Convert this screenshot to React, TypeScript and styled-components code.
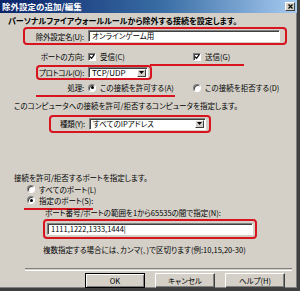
import styled, { createGlobalStyle } from "styled-components";

const GlobalStyle = createGlobalStyle`
    html, body {
        margin: 0;
        padding: 0;
        background: #d4d0c8;
    }
    body {
        font-family: "Noto Sans CJK JP", "Noto Sans", sans-serif;
        font-feature-settings: "palt";
        font-size: 7.5px;
        color: #000;
    }
`;

const RED = "#d8141e";

const Window = styled.div`
    width: 297px;
    height: 288px;
    background: #d4d0c8;
    border-right: 3px solid #404040;
    border-bottom: 3px solid #404040;
    box-shadow: inset -1px -1px #808080;
    display: flex;
    flex-direction: column;
    overflow: hidden;
`;
const TitleBar = styled.div`
    height: 13px;
    display: flex;
    align-items: center;
    justify-content: space-between;
    background: linear-gradient(to right, #0a246a, #3a6ea5 55%, #a6caf0);
    padding: 0 2px 0 2px;
`;
const Title = styled.span`
    color: #fff;
    font-weight: bold;
    font-size: 8.5px;
    line-height: 13px;
    white-space: nowrap;
`;
const CloseButton = styled.div`
    width: 10px;
    height: 9px;
    background: #d4d0c8;
    border: 1px solid;
    border-color: #fff #404040 #404040 #fff;
    box-sizing: border-box;
    display: flex;
    align-items: center;
    justify-content: center;
`;
const Heading = styled.div`
    margin-top: 2px;
    padding-left: 8px;
    height: 11px;
    line-height: 11px;
    font-size: 8px;
    font-weight: bold;
    white-space: nowrap;
`;
const Row = styled.div<{ $top?: number; $indent?: number; $h?: number }>`
    display: flex;
    align-items: center;
    margin-top: ${({ $top }) => $top ?? 0}px;
    padding-left: ${({ $indent }) => $indent ?? 0}px;
    height: ${({ $h }) => $h ?? 12}px;
    white-space: nowrap;
`;
const Highlight = styled.div<{ $pad?: string; $w?: number }>`
    display: flex;
    align-items: center;
    gap: 4px;
    box-sizing: border-box;
    width: ${({ $w }) => ($w ? `${$w}px` : "auto")};
    border: 2px solid ${RED};
    border-radius: 4px;
    padding: ${({ $pad }) => $pad ?? "1px 3px"};
`;
const Label = styled.span<{ $w?: number }>`
    display: inline-block;
    width: ${({ $w }) => ($w ? `${$w}px` : "auto")};
    text-align: right;
    letter-spacing: -0.2px;
    white-space: nowrap;
`;
const Underlined = styled.div<{ $lead?: number }>`
    display: flex;
    align-items: center;
    border-bottom: 2px solid ${RED};
    padding-left: ${({ $lead }) => $lead ?? 0}px;
    padding-bottom: 2px;
    margin-bottom: -4px;
`;
const TextInput = styled.div<{ $w: number; $h?: number }>`
    width: ${({ $w }) => $w}px;
    height: ${({ $h }) => $h ?? 12}px;
    box-sizing: border-box;
    background: #fff;
    border: 1px solid;
    border-color: #808080 #fff #fff #808080;
    box-shadow: inset 1px 1px #404040;
    padding-left: 3px;
    line-height: 10px;
    display: flex;
    align-items: center;
    white-space: nowrap;
`;
const Select = styled(TextInput)`
    justify-content: space-between;
    padding-right: 1px;
`;
const DropButton = styled.span`
    width: 9px;
    height: 8px;
    box-sizing: border-box;
    background: #d4d0c8;
    border: 1px solid;
    border-color: #fff #404040 #404040 #fff;
    display: flex;
    align-items: center;
    justify-content: center;
`;
const Option = styled.div<{ $w?: number }>`
    display: flex;
    align-items: center;
    gap: 4px;
    width: ${({ $w }) => ($w ? `${$w}px` : "auto")};
`;
const Box = styled.span`
    width: 8px;
    height: 8px;
    box-sizing: border-box;
    background: #fff;
    border: 1px solid;
    border-color: #808080 #fff #fff #808080;
    box-shadow: inset 1px 1px #404040;
    display: inline-flex;
    align-items: center;
    justify-content: center;
`;
const Round = styled(Box)`
    border-radius: 50%;
`;
const Dot = styled.span`
    width: 3px;
    height: 3px;
    border-radius: 50%;
    background: #000;
`;
const Separator = styled.div`
    margin: 13px 5px 0 25px;
    height: 1px;
    border-top: 1px solid #808080;
    border-bottom: 1px solid #fff;
`;
const ButtonBar = styled.div`
    display: flex;
    gap: 10px;
    margin-top: 2px;
    padding-left: 85px;
`;
const Button = styled.div<{ $default?: boolean }>`
    width: 60px;
    height: 15px;
    box-sizing: border-box;
    display: flex;
    align-items: center;
    justify-content: center;
    border: 1px solid;
    border-color: ${({ $default }) => ($default ? "#000" : "#fff #404040 #404040 #fff")};
    box-shadow: ${({ $default }) =>
        $default ? "inset 1px 1px #fff, inset -1px -1px #808080" : "inset -1px -1px #808080"};
`;

function Check() {
    return (
        <Box>
            <svg width="6" height="6" viewBox="0 0 7 7">
                <path d="M1 3 L3 5 L6 1" stroke="#000" strokeWidth="1.4" fill="none" />
            </svg>
        </Box>
    );
}

function Radio({ on }: { on?: boolean }) {
    return <Round>{on && <Dot />}</Round>;
}

function Arrow() {
    return (
        <DropButton>
            <svg width="5" height="3" viewBox="0 0 5 3">
                <path d="M0 0 H5 L2.5 3 Z" fill="#000" />
            </svg>
        </DropButton>
    );
}

export default function App() {
    return (
        <>
            <GlobalStyle />
            <Window>
                <TitleBar>
                    <Title>除外設定の追加/編集</Title>
                    <CloseButton>
                        <svg width="5" height="5" viewBox="0 0 5 5">
                            <path d="M0.5 0.5 L4.5 4.5 M4.5 0.5 L0.5 4.5" stroke="#000" strokeWidth="1.2" />
                        </svg>
                    </CloseButton>
                </TitleBar>
                <Heading>パーソナルファイアウォールルールから除外する接続を設定します。</Heading>

                <Row $top={1} $indent={23} $h={18}>
                    <Highlight $pad="1px 3px" $w={264}>
                        <Label $w={56}>除外設定名(U):</Label>
                        <TextInput $w={192}>オンラインゲーム用</TextInput>
                    </Highlight>
                </Row>

                <Row $top={6} $indent={36}>
                    <Label $w={48}>ポートの方向:</Label>
                    <Option $w={62} style={{ marginLeft: 4 }}>
                        <Check />
                        <span>受信(C)</span>
                    </Option>
                    <Underlined $lead={43}>
                        <Option>
                            <Check />
                            <span>送信(G)</span>
                        </Option>
                        <span style={{ width: 14 }} />
                    </Underlined>
                </Row>

                <Row $top={3} $indent={36} $h={15}>
                    <Highlight $pad="0 2px 0 1px" style={{ gap: 5 }}>
                        <Label $w={44}>プロトコル(O):</Label>
                        <Select $w={60} $h={11} style={{ fontSize: 8 }}>
                            <span>TCP/UDP</span>
                            <Arrow />
                        </Select>
                    </Highlight>
                </Row>

                <Row $top={2} $indent={36}>
                    <Underlined>
                        <Label $w={48}>処理:</Label>
                        <Option $w={87} style={{ marginLeft: 4 }}>
                            <Radio on />
                            <span>この接続を許可する(A)</span>
                        </Option>
                    </Underlined>
                    <Option style={{ marginLeft: 18 }}>
                        <Radio />
                        <span>この接続を拒否する(D)</span>
                    </Option>
                </Row>

                <Row $top={7} $indent={14}>
                    このコンピュータへの接続を許可/拒否するコンピュータを指定します。
                </Row>

                <Row $top={3} $indent={49} $h={18}>
                    <Highlight $pad="1px 3px">
                        <Label $w={31}>種類(Y):</Label>
                        <Select $w={117}>
                            <span>すべてのIPアドレス</span>
                            <Arrow />
                        </Select>
                    </Highlight>
                </Row>

                <Row $top={39} $indent={14}>
                    接続を許可/拒否するポートを指定します。
                </Row>
                <Row $top={1} $indent={27} $h={11}>
                    <Option>
                        <Radio />
                        <span>すべてのポート(L)</span>
                    </Option>
                </Row>
                <Row $top={0} $indent={24} $h={11}>
                    <Underlined $lead={3} style={{ width: 66 }}>
                        <Option>
                            <Radio on />
                            <span>指定のポート(S):</span>
                        </Option>
                    </Underlined>
                </Row>
                <Row $top={1} $indent={45}>
                    ポート番号/ポートの範囲を1から65535の間で指定(N):
                </Row>
                <Row $top={1} $indent={43} $h={20}>
                    <Highlight $pad="2px 2px" $w={214}>
                        <TextInput $w={206}>1111,1222,1333,1444|</TextInput>
                    </Highlight>
                </Row>
                <Row $top={5} $indent={43}>
                    複数指定する場合には、カンマ(、)で区切ります(例:10,15,20-30)
                </Row>

                <Separator />
                <ButtonBar>
                    <Button $default>OK</Button>
                    <Button>キャンセル</Button>
                    <Button>ヘルプ(H)</Button>
                </ButtonBar>
            </Window>
        </>
    );
}
